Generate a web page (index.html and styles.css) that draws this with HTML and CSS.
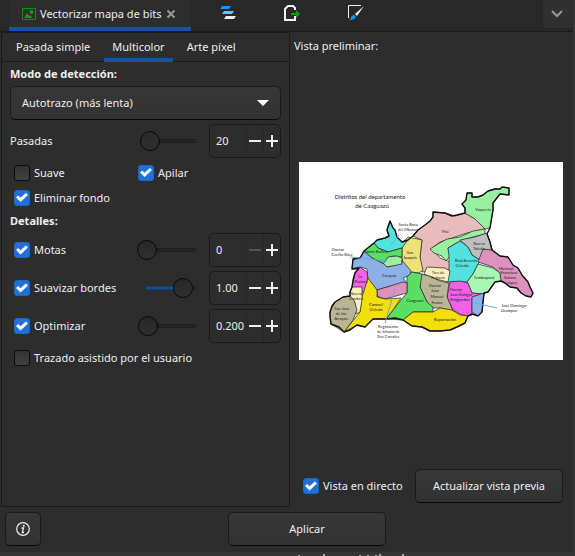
FILE: index.html
```html
<!DOCTYPE html>
<html lang="es">
<head>
<meta charset="utf-8">
<title>Vectorizar mapa de bits</title>
<link rel="stylesheet" href="styles.css">
</head>
<body>
<div class="dock">
  <header class="dock-tabs">
    <div class="dock-tab">
      <svg width="14" height="12" viewBox="0 0 14 12"><path d="M.5.5h13v11H.5z" fill="none" stroke="#0a920a"/><path d="M2 10l3-5 2 3 1-1 3 3z" fill="#0aa00a"/><circle cx="9.500" cy="4" r="2" fill="#0aa00a"/></svg>
      <span>Vectorizar mapa de bits</span>
      <button class="plain close" aria-label="Cerrar"><svg width="10" height="10" viewBox="0 0 10 10"><path d="M1.500 1.500l7 7M8.500 1.500l-7 7" stroke="#999" stroke-width="2"/></svg></button>
    </div>
    <button class="plain tool" aria-label="Objetos"><svg width="16" height="16" viewBox="0 0 16 16"><path d="M0 4l2-3h9l-2 3z" fill="#0a99ee"/><path d="M2 9l2-3h10l-2 3z" fill="#69c3f2"/><path d="M4 14l2-3h10l-2 3z" fill="#f0f0f0"/></svg></button>
    <button class="plain tool" aria-label="Exportar"><svg width="16" height="16" viewBox="0 0 16 16"><path d="M11 11v4H1V4l3-3h5l2 2v2" fill="none" stroke="#f0f0f0" stroke-width="2"/><path d="M7 8h5V5l4 4-4 4v-3H7z" fill="#0a9a14"/></svg></button>
    <button class="plain tool" aria-label="Relleno y borde"><svg width="16" height="16" viewBox="0 0 16 16"><path d="M.5 13V.5H13" fill="none" stroke="#eee"/><path d="M16 1L9 11 7 9z" fill="#eee"/><path d="M6 10l2 2q-1 3-7 3 2-1 2-3 1-2 3-2z" fill="#0a99ee"/></svg></button>
    <button class="plain chevron" aria-label="Más"><svg width="12" height="8" viewBox="0 0 12 8"><path d="M1 1l5 5 5-5" fill="none" stroke="#999" stroke-width="2"/></svg></button>
  </header>

  <main class="panes">
    <section class="options">
      <nav class="subtabs">
        <button class="plain subtab">Pasada simple</button>
        <button class="plain subtab active">Multicolor</button>
        <button class="plain subtab">Arte píxel</button>
      </nav>
      <div class="form">
        <label class="heading" for="mode">Modo de detección:</label>
        <div class="select-wrap">
          <select id="mode" class="raised"><option>Autotrazo (más lenta)</option></select>
          <svg class="arrow" width="12" height="6" viewBox="0 0 12 6"><path d="M0 0h12L6 6z" fill="#fff"/></svg>
        </div>
        <div class="row">
          <label class="name" for="passes">Pasadas</label>
          <input class="scale" type="range" min="0" max="100" value="8" aria-label="Pasadas">
          <div class="spin"><input id="passes" value="20"><button class="plain minus" aria-label="Menos"></button><button class="plain plus" aria-label="Más"></button></div>
        </div>
        <div class="checks">
          <label class="check"><input type="checkbox">Suave</label>
          <label class="check"><input type="checkbox" checked>Apilar</label>
          <label class="check"><input type="checkbox" checked>Eliminar fondo</label>
        </div>
        <h2 class="heading details">Detalles:</h2>
        <div class="row">
          <label class="check name"><input type="checkbox" checked>Motas</label>
          <input class="scale" type="range" min="0" max="100" value="0" aria-label="Motas">
          <div class="spin"><input value="0" aria-label="Motas"><button class="plain minus" disabled aria-label="Menos"></button><button class="plain plus" aria-label="Más"></button></div>
        </div>
        <div class="row">
          <label class="check name"><input type="checkbox" checked>Suavizar bordes</label>
          <input class="scale filled" type="range" min="0" max="100" value="90" aria-label="Suavizar bordes">
          <div class="spin"><input value="1.00" aria-label="Suavizar bordes"><button class="plain minus" aria-label="Menos"></button><button class="plain plus" aria-label="Más"></button></div>
        </div>
        <div class="row">
          <label class="check name"><input type="checkbox" checked>Optimizar</label>
          <input class="scale" type="range" min="0" max="100" value="3" aria-label="Optimizar">
          <div class="spin"><input value="0.200" aria-label="Optimizar"><button class="plain minus" aria-label="Menos"></button><button class="plain plus" aria-label="Más"></button></div>
        </div>
        <label class="check last"><input type="checkbox">Trazado asistido por el usuario</label>
      </div>
    </section>

    <section class="preview">
      <p class="preview-title">Vista preliminar:</p>
      <div class="canvas">
        <svg class="map" viewBox="299 162 264 198">
          <g stroke="#222" stroke-width=".7" stroke-linejoin="round">
            <path fill="#e8bcbc" d="M413 236L418 230 425 225 430 221 433 217V212L445 213 455 216 465 213 477 220 485 229 467 233 440 242 432 248 440 258 450 262V270L430 271 422 272 420 257 422 240z"/>
            <path fill="#98f0a0" d="M462 204L466 200 467 193 472 193V197L478 197 483 195 488 191 495 189 500 189 502 187 509 188V195L500 194 493 203V210L490 228 485 229 475 219 465 213V208z"/>
            <path fill="#98f0a0" d="M430 249L438 244 447 239 460 237 473 231 485 229V234L473 237 460 241 448 248 450 256 446 261 442 256 434 253z"/>
            <path fill="#bfbfbf" d="M460 240L475 237 487 233 490 242 492 250H483L480 260 472 255 468 247z"/>
            <path fill="#52e2df" d="M448 248L460 241 468 247 472 255 481 261 478 264 473 274 467 282H447L449 270V256z"/>
            <path fill="#dd91bd" d="M478 262L483 249 492 250 500 256 508 257 513 265 518 268 522 275 528 282 530 287 533 293 531 297 526 296 521 293 517 288 510 287 505 283 501 281 500 273 493 267z"/>
            <path fill="#a9f6b5" d="M478 264L493 268 500 273 501 281 495 282 488 292 482 294 472 293 467 282 473 274z"/>
            <path fill="#f261e8" d="M450 282L460 281 468 283 472 293 483 294 472 298V315L467 316 460 314 453 310 447 297z"/>
            <path fill="#8eb0e8" d="M472 297L484 293 482 312 478 316 472 312z"/>
            <path fill="#f7f0bd" d="M424 274L427 267 445 268 450 271 448 282 436 279z"/>
            <path fill="#bab695" d="M421 274L429 276 440 281 449 283 447 297 453 311 440 308H433L427 302 420 287z"/>
            <path fill="#ede179" d="M402 243L408 237 422 240 420 257 423 270 419 273 410 272 402 262z"/>
            <path fill="#52e2df" d="M374 243L377 240 385 238 389 236 387 230 390 221 393 228 395 230 397 237 402 242 407 241 402 248 388 252 378 248z"/>
            <path fill="#59df63" d="M364 251L374 243 378 248 388 252 402 248V257L393 256 388 258 384 264 372 258z"/>
            <path fill="#98f0a0" d="M383 264L388 257 397 256 402 258V265L386 267z"/>
            <path fill="#8eb0e8" d="M352 269L353 259 360 258 364 251 372 258 384 264 387 267 402 264V260L411 271 410 275 403 278 407 283 387 287 377 290 368 280 367 269 360 267z"/>
            <path fill="#f261e8" d="M360 267L367 272 368 280 364 293 352 287 355 273z"/>
            <path fill="#59df63" d="M407 277L412 272 422 274 420 287 427 302 433 307V312H413L403 320 386 319 393 310 401 300 407 293z"/>
            <path fill="#dd91bd" d="M377 290L387 287 403 282 407 283V293L396 296 385 299 377 296z"/>
            <path fill="#f2df0b" d="M368 278L377 290V297L385 299 401 298 393 310 386 319H373L365 327 357 325 344 332 352 322 360 312 362 297z"/>
            <path fill="#f7f0bd" d="M352 287H362V300L360 312 356 314 355 303 350 297V292z"/>
            <path fill="#bab695" d="M330 312L335 302 343 297 350 296 354 300 357 310 353 320 344 332 331 324z"/>
            <path fill="#f2df0b" d="M403 320L413 312H433L440 308 452 310 460 315 468 316 465 323 457 327 450 330 440 331 430 331 422 327 412 326z"/>
          </g>
          <path fill="none" stroke="#111" stroke-width="1.400" stroke-linejoin="round" d="M344 332L339 327 331 324 330 317 330 312 332 306 335 302 343 297 350 296 350 292 352 287 353 280 355 273 359 268 352 269 353 259 360 258 364 251 369 247 374 243 377 240 385 238 389 236 387 230 390 221 393 228 395 230 397 237 402 242 408 240 413 236 418 230 425 225 430 221 433 217V212L445 213 452 216 457 215 465 213V208L462 204 466 200 467 193 472 193V197L478 197 483 195 488 191 495 189 500 189 502 187 509 188V195L500 194 493 203V210L490 228 487 234 490 242 492 250 500 256 508 257 513 265 518 268 522 275 528 282 530 287 533 293 531 297 526 296 521 293 517 288 510 287 505 283 501 281 495 282 488 292 484 293 482 312 478 316 472 314 468 316 465 323 457 327 450 330 440 331 430 331 422 327 412 326 403 320 395 318 386 319H373L365 327 357 325 350 330z"/>
          <g class="lead"><path d="M399 235l-8 10M350 257l37 4M395 289l-10 34M475 303l22 5"/></g>
          <g class="map-title"><text x="370" y="199">Distritos del departamento</text><text x="372" y="208">de Caaguazú</text></g>
          <g class="map-text">
            <text x="408" y="226">Santa Rosa</text><text x="408" y="231">del Mbutuy</text>
            <text x="338" y="251">Doctor</text><text x="342" y="256">Cecilio Báez</text>
            <text x="376" y="253">Simón Bolívar</text><text x="410" y="254">San</text><text x="410" y="259">Joaquín</text>
            <text x="445" y="233">Yhú</text><text x="483" y="211">Vaquería</text><text x="479" y="245">Nueva</text><text x="479" y="250">Toledo</text>
            <text x="466" y="262">Raúl Arsenio</text><text x="462" y="267">Oviedo</text>
            <text x="506" y="270">Mariscal</text><text x="509" y="274">Francisco</text><text x="510" y="279">Solano</text><text x="512" y="284">López</text>
            <text x="484" y="279">Tembiaporá</text><text x="389" y="277">Carayaó</text>
            <text x="360" y="278">La</text><text x="361" y="283">Pastora</text><text x="356" y="295">Nueva</text><text x="356" y="300">Londres</text>
            <text x="342" y="310">San José</text><text x="341" y="315">de los</text><text x="341" y="320">Arroyos</text>
            <text x="376" y="306">Coronel</text><text x="376" y="311">Oviedo</text><text x="415" y="302">Caaguazú</text>
            <text x="438" y="274">Tres de</text><text x="438" y="279">Febrero</text>
            <text x="435" y="287">Doctor</text><text x="435" y="292">Juan</text><text x="437" y="298">Manuel</text><text x="437" y="304">Frutos</text>
            <text x="456" y="291">Doctor</text><text x="461" y="296">Juan Eulogio</text><text x="460" y="301">Estigarribia</text>
            <text x="445" y="321">Repatriación</text>
            <text x="388" y="328">Regimiento</text><text x="388" y="333">de Infantería</text><text x="388" y="338">Tres Corrales</text>
            <text x="514" y="307">José Domingo</text><text x="509" y="312">Ocampos</text>
          </g>
        </svg>
      </div>
      <div class="preview-actions">
        <label class="check"><input type="checkbox" checked>Vista en directo</label>
        <button class="raised update">Actualizar vista previa</button>
      </div>
    </section>
  </main>

  <footer class="actions">
    <button class="raised info" aria-label="Información"><svg width="14" height="14" viewBox="0 0 14 14"><circle cx="7" cy="7" r="6.300" fill="none" stroke="#eee" stroke-width="1.200"/><circle cx="7.800" cy="3.800" r="1" fill="#eee"/><path d="M5.500 6H7.500L6.300 10.500H8" fill="none" stroke="#eee" stroke-width="1.300"/></svg></button>
    <button class="raised apply">Aplicar</button>
  </footer>
</div>
<svg class="below" width="110" height="4" viewBox="0 0 110 4"><path d="M3 3h2v1H3zM28 2h2v2h-2zM64 3h2v1h-2zM72 3h2v1h-2zM80 3h2v1h-2zM84 2h2v2h-2zM107 2h2v2h-2z" fill="#aaa"/></svg>
</body>
</html>
```
FILE: styles.css
```css
* { box-sizing: border-box; }
body {
  margin: 0;
  background: #353535;
  color: #eee;
  font: 11px/16px "Noto Sans", "Open Sans", sans-serif;
}
button, input, select { font: inherit; color: inherit; margin: 0; }
.plain { border: 0; padding: 0; background: none; }
.dock {
  display: flex;
  flex-direction: column;
  height: calc(100vh - 4px);
  margin-right: 2px;
  background: #2d2d2d;
}
.below { display: block; margin: 0 170px 0 auto; }
.dock-tabs {
  display: flex;
  height: 32px;
  padding-left: 9px;
  background: #282828;
  border-bottom: 1px solid #1b1b1b;
}
.dock-tab {
  display: flex;
  align-items: center;
  gap: 4px;
  width: 182px;
  padding: 0 15px 0 13px;
  background: #2d2d2d;
  border-bottom: 4px solid #15539e;
  white-space: nowrap;
}
.dock-tab span { flex: 1; }
.dock-tab svg, .tool svg, .chevron svg { display: block; flex: none; }
.tool { width: 64px; padding: 0 0 6px 29px; }
.chevron {
  width: 30px;
  height: 28px;
  margin-left: auto;
  padding: 0 8px;
  background: #303030;
  border-radius: 0 0 4px 4px;
}
.panes { display: flex; flex: 1; }
.options {
  width: 289px;
  margin-left: 1px;
  border: 1px solid #1b1b1b;
}
.subtabs { display: flex; gap: 6px; height: 29px; padding-left: 6px; border-bottom: 1px solid #1b1b1b; }
.subtab { height: 29px; padding: 2px 8px 0; border-bottom: 4px solid transparent; }
.subtab.active { border-color: #15539e; }
.form { display: flex; flex-direction: column; padding: 4px 8px; }
.heading { margin: 0; font-size: 11px; font-weight: 700; }
.details { margin: 1px 0 4px; }
.select-wrap { position: relative; margin: 4px 0; }
.raised {
  height: 34px;
  border: 1px solid #1b1b1b;
  border-bottom-color: #080808;
  border-radius: 5px;
  background: linear-gradient(#373737, #323232);
}
.select-wrap select { display: block; width: 100%; padding: 0 11px; appearance: none; }
.arrow { position: absolute; right: 12px; top: 14px; pointer-events: none; }
.row { display: flex; align-items: center; height: 34px; }
.row + .row { margin-top: 4px; }
.name { flex: 1; }
.check { display: flex; align-items: center; gap: 4px; height: 25px; padding-left: 4px; white-space: nowrap; }
.check input {
  width: 16px;
  height: 16px;
  appearance: none;
  border: 1px solid #0c0c0c;
  border-radius: 3px;
  background: linear-gradient(#333, #414141);
}
.check input:checked {
  border-color: #1b68cb;
  background: #2070d8;
}
.check input:checked::before {
  content: "";
  display: block;
  width: 12px;
  height: 10px;
  margin: 2px 1px;
  background: #fff;
  clip-path: polygon(0 50%, 18% 30%, 38% 52%, 82% 5%, 100% 25%, 38% 95%);
}
.checks { display: grid; grid-template-columns: 124px 1fr; margin: 2px 0; }
.scale {
  width: 60px;
  height: 20px;
  margin-right: 12px;
  appearance: none;
  background: none;
}
.scale::-webkit-slider-runnable-track {
  height: 4px;
  border-radius: 2px;
  background: linear-gradient(#1b1b1b, #262626, #1b1b1b) right / 51px 4px no-repeat;
}
.scale.filled::-webkit-slider-runnable-track {
  background:
    linear-gradient(#103a6c, #15539e, #103a6c) 9px 0 / 30px 4px no-repeat,
    linear-gradient(#1b1b1b, #262626, #1b1b1b) right / 51px 4px no-repeat;
}
.scale::-webkit-slider-thumb {
  width: 20px;
  height: 20px;
  margin-top: -8px;
  appearance: none;
  border: 1px solid #080808;
  border-radius: 50%;
  background: linear-gradient(#282828, #303030);
}
.spin {
  display: flex;
  width: 72px;
  height: 34px;
  border: 1px solid #1b1b1b;
  border-radius: 5px;
}
.spin input { width: 36px; padding: 0 0 0 6px; border: 0; background: none; }
.spin button {
  flex: 1;
  border-left: 1px solid #282828;
  background: linear-gradient(#eee, #eee) center / 12px 2px no-repeat;
}
.spin .plus { background: linear-gradient(#eee, #eee) center / 12px 2px no-repeat, linear-gradient(#eee, #eee) center / 2px 12px no-repeat; }
.spin button:disabled { opacity: .2; }
.last { margin-top: 2px; }
.preview { display: flex; flex-direction: column; flex: 1; padding: 6px 10px 4px 4px; }
.preview-title { margin: 0; }
.canvas { display: flex; flex: 1; align-items: center; padding: 0 0 2px 5px; }
.map { display: block; width: 100%; background: #fff; }
.map text { fill: #222; text-anchor: middle; font-family: Lato, sans-serif; }
.map-title text { font-size: 6px; }
.map-text text { font-size: 4px; }
.lead { fill: none; stroke: #6fa5d8; stroke-width: 1; }
.preview-actions { display: flex; justify-content: space-between; align-items: center; padding-left: 5px; }
.update { width: 148px; padding: 0; }
.actions { display: flex; padding: 5px 0 5px 5px; height: 45px; }
.info { width: 36px; padding: 0; display: grid; place-items: center; }
.apply { width: 158px; margin: 0 auto; padding: 0; }
```
